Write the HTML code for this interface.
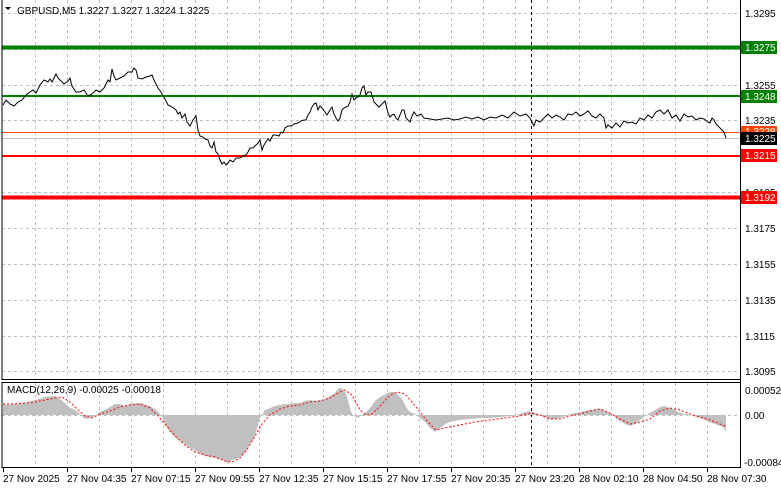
<!DOCTYPE html>
<html><head><meta charset="utf-8"><style>
html,body{margin:0;padding:0;background:#fff;}
body{width:781px;height:489px;overflow:hidden;font-family:"Liberation Sans",sans-serif;}
svg text{font-family:"Liberation Sans",sans-serif;font-size:10px;fill:#000;}
</style></head><body>
<svg width="781" height="489" viewBox="0 0 781 489" xmlns="http://www.w3.org/2000/svg">
<rect width="781" height="489" fill="#fff"/>
<g stroke="#c0c0c0" stroke-dasharray="3,3" stroke-width="1">
<line x1="35.5" y1="0" x2="35.5" y2="379"/><line x1="67.5" y1="0" x2="67.5" y2="379"/><line x1="99.5" y1="0" x2="99.5" y2="379"/><line x1="131.5" y1="0" x2="131.5" y2="379"/><line x1="163.5" y1="0" x2="163.5" y2="379"/><line x1="195.5" y1="0" x2="195.5" y2="379"/><line x1="227.5" y1="0" x2="227.5" y2="379"/><line x1="259.5" y1="0" x2="259.5" y2="379"/><line x1="291.5" y1="0" x2="291.5" y2="379"/><line x1="323.5" y1="0" x2="323.5" y2="379"/><line x1="355.5" y1="0" x2="355.5" y2="379"/><line x1="387.5" y1="0" x2="387.5" y2="379"/><line x1="419.5" y1="0" x2="419.5" y2="379"/><line x1="451.5" y1="0" x2="451.5" y2="379"/><line x1="483.5" y1="0" x2="483.5" y2="379"/><line x1="515.5" y1="0" x2="515.5" y2="379"/><line x1="547.5" y1="0" x2="547.5" y2="379"/><line x1="579.5" y1="0" x2="579.5" y2="379"/><line x1="611.5" y1="0" x2="611.5" y2="379"/><line x1="643.5" y1="0" x2="643.5" y2="379"/><line x1="675.5" y1="0" x2="675.5" y2="379"/><line x1="707.5" y1="0" x2="707.5" y2="379"/>
<line x1="35.5" y1="383" x2="35.5" y2="467"/><line x1="67.5" y1="383" x2="67.5" y2="467"/><line x1="99.5" y1="383" x2="99.5" y2="467"/><line x1="131.5" y1="383" x2="131.5" y2="467"/><line x1="163.5" y1="383" x2="163.5" y2="467"/><line x1="195.5" y1="383" x2="195.5" y2="467"/><line x1="227.5" y1="383" x2="227.5" y2="467"/><line x1="259.5" y1="383" x2="259.5" y2="467"/><line x1="291.5" y1="383" x2="291.5" y2="467"/><line x1="323.5" y1="383" x2="323.5" y2="467"/><line x1="355.5" y1="383" x2="355.5" y2="467"/><line x1="387.5" y1="383" x2="387.5" y2="467"/><line x1="419.5" y1="383" x2="419.5" y2="467"/><line x1="451.5" y1="383" x2="451.5" y2="467"/><line x1="483.5" y1="383" x2="483.5" y2="467"/><line x1="515.5" y1="383" x2="515.5" y2="467"/><line x1="547.5" y1="383" x2="547.5" y2="467"/><line x1="579.5" y1="383" x2="579.5" y2="467"/><line x1="611.5" y1="383" x2="611.5" y2="467"/><line x1="643.5" y1="383" x2="643.5" y2="467"/><line x1="675.5" y1="383" x2="675.5" y2="467"/><line x1="707.5" y1="383" x2="707.5" y2="467"/>
<line x1="2" y1="13.5" x2="740" y2="13.5"/><line x1="2" y1="49.5" x2="740" y2="49.5"/><line x1="2" y1="85.5" x2="740" y2="85.5"/><line x1="2" y1="120.5" x2="740" y2="120.5"/><line x1="2" y1="156.5" x2="740" y2="156.5"/><line x1="2" y1="192.5" x2="740" y2="192.5"/><line x1="2" y1="228.5" x2="740" y2="228.5"/><line x1="2" y1="264.5" x2="740" y2="264.5"/><line x1="2" y1="300.5" x2="740" y2="300.5"/><line x1="2" y1="336.5" x2="740" y2="336.5"/><line x1="2" y1="371.5" x2="740" y2="371.5"/>
<line x1="2" y1="415.5" x2="740" y2="415.5"/>
</g>
<line x1="531.5" y1="0" x2="531.5" y2="467" stroke="#000" stroke-dasharray="3,3"/>
<line x1="2" y1="47.5" x2="740" y2="47.5" stroke="#007f00" stroke-width="4"/>
<line x1="2" y1="96" x2="740" y2="96" stroke="#007f00" stroke-width="2"/>
<line x1="2" y1="132.5" x2="740" y2="132.5" stroke="#ff4500" stroke-width="1"/>
<line x1="2" y1="138.5" x2="740" y2="138.5" stroke="#c0c0c0" stroke-width="1"/>
<line x1="2" y1="156" x2="740" y2="156" stroke="#ff0000" stroke-width="2"/>
<line x1="2" y1="197.5" x2="740" y2="197.5" stroke="#ff0000" stroke-width="4"/>
<polyline fill="none" stroke="#000" stroke-width="1" points="3,105 6,100 10,104 14,106 18,102 22,100 26,95 30,92 33,90 36,93 40,85 44,80 48,82 50,79 52,82 56,74 58,78 60,80 64,84 68,81 70,78 72,86 76,92 80,92 84,90 88,96 92,94 96,90 100,92 104,88 108,80 110,82 112,69 114,76 116,80 120,78 124,76 128,72 132,72 134,68 136,70 138,78 142,79 146,77 150,76 152,75 154,80 158,88 161,92 163,96 164,97 166,101 168,105 172,107 176,110 178,114 180,112 182,118 185,114 187,122 190,126 193,120 196,116 198,130 200,136 203,137 205,139 208,140 210,146 212,148 214,142 216,152 218,154 220,160 222,164 224,162 226,165 228,163 230,160 233,162 236,158 240,158 243,156 246,155 248,152 250,148 253,148 256,145 258,143 260,140 262,150 264,145 266,142 268,139 270,141 273,135 276,135 279,136 281,132 283,133 285,128 288,126 291,126 294,124 298,123 301,121 304,120 306,120 308,115 310,112 312,107 314,104 316,103 318,110 320,106 322,108 325,112 327,115 330,110 332,107 334,114 336,118 338,121 340,118 342,110 344,108 348,106 350,102 352,94 354,100 356,98 358,97 360,95 362,88 364,86 366,95 368,92 371,92 374,102 376,104 379,107 382,104 385,101 388,113 390,117 392,115 394,114 396,118 398,120 400,115 402,110 404,110 406,118 410,122 412,116 414,112 417,116 421,114 424,118 430,119 436,120 442,119 448,118 454,120 460,119 466,117 472,119 478,117 484,120 490,117 496,118 502,115 508,118 514,112 520,116 526,114 530,118 534,126 536,120 540,122 544,118 548,114 552,118 556,115 560,117 564,120 568,114 572,115 576,112 580,116 584,114 588,111 592,116 596,118 600,114 604,118 606,128 608,125 612,128 616,123 620,127 624,121 628,123 632,122 636,124 640,118 644,120 648,115 652,118 656,112 660,110 664,114 668,110 672,118 676,115 680,121 684,114 688,117 692,116 696,120 700,118 704,119 708,122 710,123 712,118 714,120 716,124 720,128 722,130 724,132 726,138"/>
<text x="17" y="14">GBPUSD,M5  1.3227 1.3227 1.3224 1.3225</text>
<polygon points="5,7 11,7 8,10" fill="#000"/>
<line x1="2" y1="0" x2="2" y2="380" stroke="#000"/>
<line x1="740.5" y1="0" x2="740.5" y2="468" stroke="#000"/>
<line x1="2" y1="379.5" x2="741" y2="379.5" stroke="#000"/>
<line x1="2" y1="382.5" x2="741" y2="382.5" stroke="#000"/>
<line x1="2" y1="382" x2="2" y2="468" stroke="#000"/>
<line x1="2" y1="467.5" x2="741" y2="467.5" stroke="#000"/>
<polygon fill="#c0c0c0" points="3,415 3,404 10,405 15,404 25,403 35,400 45,397 55,396 60,399 65,403 70,408 75,410 80,414 85,419 90,418 95,416 100,412 105,410 110,407 115,404 120,404 125,406 130,404 140,403 150,406 155,409 160,414 163,418 165,425 170,432 175,437 180,441 185,444 190,448 195,450 200,454 205,456 210,457 215,458 220,459 225,461 228,463 232,460 238,458 243,455 247,450 250,444 253,440 256,432 258,425 260,418 262,415 265,410 270,408 275,406 280,405 285,404 290,404 295,403 300,403 305,401 310,400 315,401 320,400 325,399 330,396 335,393 338,389 340,388 343,389 346,394 349,404 351,412 354,416 358,418 362,415 366,412 370,408 373,404 376,400 380,397 386,394 390,392 394,392 398,395 402,399 405,405 408,410 410,412 415,414 420,418 425,422 430,428 435,432 440,428 445,424 450,422 455,421 460,420 470,419 480,418 490,418 500,417 510,416 520,414 525,412 530,411 535,413 540,415 545,417 550,419 555,419 560,418 570,414 580,412 590,410 600,409 610,413 615,417 620,421 625,424 630,426 635,424 640,420 645,416 650,413 655,410 660,407 665,406 670,408 675,410 680,413 690,415 700,418 705,420 712,423 720,426 724,428 726,432 726,415"/>
<polyline fill="none" stroke="#ff0000" stroke-dasharray="2,2" points="3,404 15,404 25,403 35,402 45,400 55,398 62,397 70,402 78,410 85,416 92,418 100,414 110,411 120,407 130,405 140,404 150,408 158,416 166,425 175,436 185,445 195,452 205,455 215,457 225,461 232,462 240,458 248,448 255,436 262,424 270,415 280,409 290,406 300,405 310,402 320,401 330,398 338,393 345,390 352,395 360,410 366,415 372,414 380,406 390,395 398,392 405,394 412,402 420,412 428,422 436,430 445,428 460,425 475,422 490,420 505,418 520,416 531,413 540,415 550,419 560,419 570,416 580,414 590,411 600,409 610,413 620,419 630,424 640,422 650,419 660,411 670,408 680,410 690,414 700,417 710,420 720,424 726,426"/>
<g>
<text x="745" y="17">1.3295</text>
<text x="745" y="89">1.3255</text>
<text x="745" y="124">1.3235</text>
<text x="745" y="196">1.3195</text>
<text x="745" y="232">1.3175</text>
<text x="745" y="268">1.3155</text>
<text x="745" y="304">1.3135</text>
<text x="745" y="340">1.3115</text>
<text x="745" y="375">1.3095</text>
<rect x="741" y="41" width="36" height="13" fill="#007f00"/><text x="745" y="51" style="fill:#fff">1.3275</text>
<rect x="741" y="90" width="36" height="13" fill="#007f00"/><text x="745" y="100" style="fill:#fff">1.3248</text>
<rect x="741" y="126" width="36" height="12" fill="#ff4500"/><text x="745" y="135" style="fill:#fff">1.3228</text>
<rect x="741" y="132" width="36" height="13" fill="#000"/><text x="745" y="142" style="fill:#fff">1.3225</text>
<rect x="741" y="149" width="36" height="13" fill="#ff0000"/><text x="745" y="159" style="fill:#fff">1.3215</text>
<rect x="741" y="191" width="36" height="13" fill="#ff0000"/><text x="745" y="201" style="fill:#fff">1.3192</text>
<text x="745" y="394">0.00052</text>
<text x="745" y="419">0.00</text>
<text x="744" y="466">-0.00084</text>
</g>
<text x="7" y="393">MACD(12,26,9) -0.00025 -0.00018</text>
<g stroke="#000"><line x1="3.5" y1="468" x2="3.5" y2="472"/><line x1="67.5" y1="468" x2="67.5" y2="472"/><line x1="131.5" y1="468" x2="131.5" y2="472"/><line x1="195.5" y1="468" x2="195.5" y2="472"/><line x1="259.5" y1="468" x2="259.5" y2="472"/><line x1="323.5" y1="468" x2="323.5" y2="472"/><line x1="387.5" y1="468" x2="387.5" y2="472"/><line x1="451.5" y1="468" x2="451.5" y2="472"/><line x1="515.5" y1="468" x2="515.5" y2="472"/><line x1="579.5" y1="468" x2="579.5" y2="472"/><line x1="643.5" y1="468" x2="643.5" y2="472"/><line x1="707.5" y1="468" x2="707.5" y2="472"/></g>
<text x="3" y="482">27 Nov 2025</text>
<text x="67" y="482">27 Nov 04:35</text>
<text x="131" y="482">27 Nov 07:15</text>
<text x="195" y="482">27 Nov 09:55</text>
<text x="259" y="482">27 Nov 12:35</text>
<text x="323" y="482">27 Nov 15:15</text>
<text x="387" y="482">27 Nov 17:55</text>
<text x="451" y="482">27 Nov 20:35</text>
<text x="515" y="482">27 Nov 23:20</text>
<text x="579" y="482">28 Nov 02:10</text>
<text x="643" y="482">28 Nov 04:50</text>
<text x="707" y="482">28 Nov 07:30</text>
</svg>
</body></html>
